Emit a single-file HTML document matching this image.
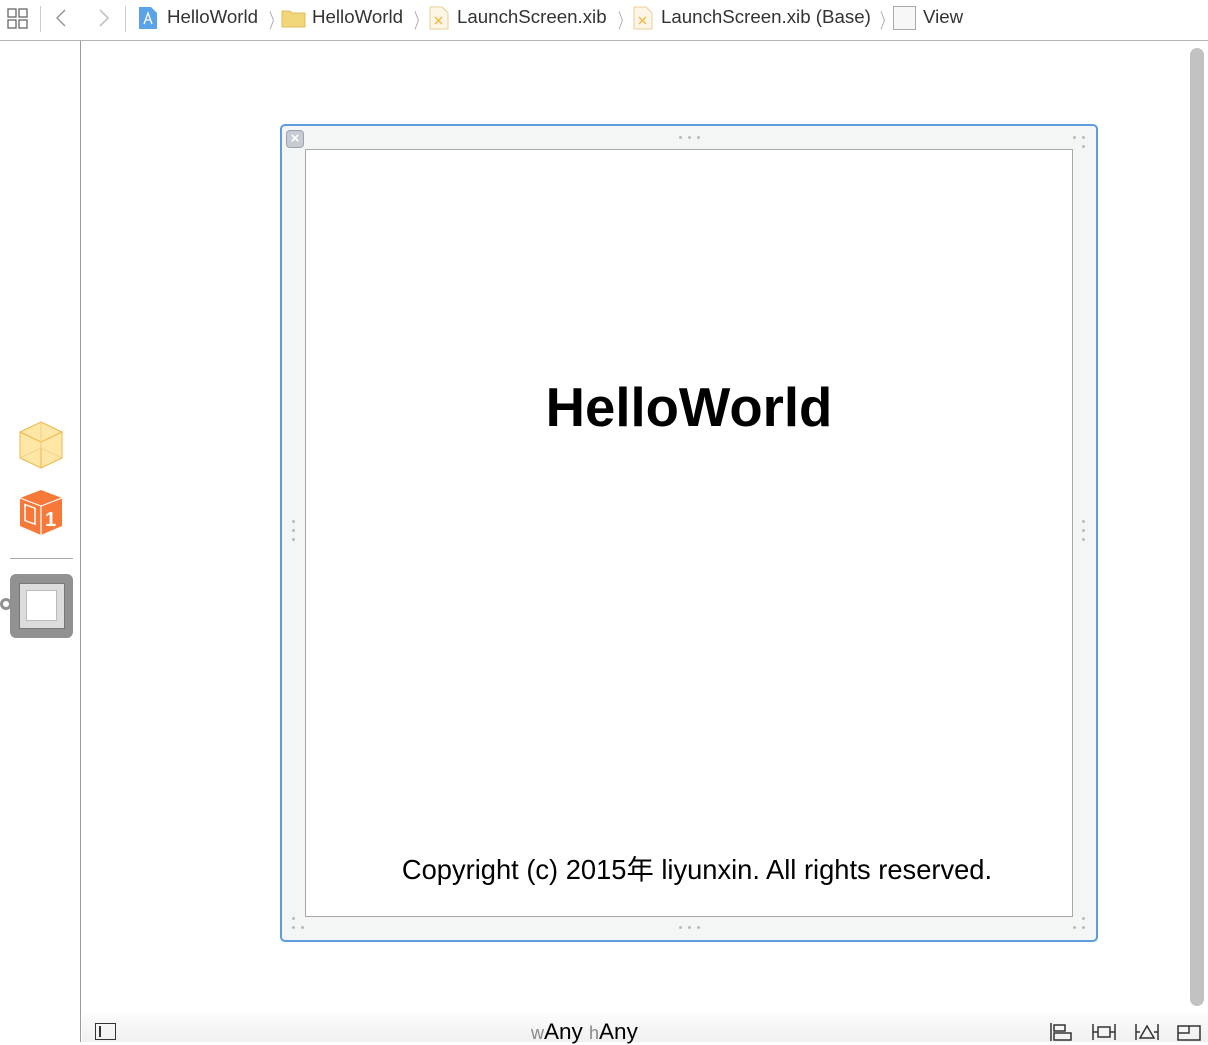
<!DOCTYPE html>
<html><head><meta charset="utf-8"><style>
*{margin:0;padding:0;box-sizing:border-box}
body{width:1208px;height:1042px;overflow:hidden;background:#fff;font-family:"Liberation Sans","Noto Sans CJK SC",sans-serif;position:relative}
.top{position:absolute;left:0;top:0;width:1208px;height:41px;background:#fff;border-bottom:1px solid #b5b5b5}
.t{position:absolute;top:6px;font-size:18.7px;color:#333;white-space:nowrap}
.sep{position:absolute;top:5px;font-size:20px;color:#aaa;transform:scaleX(.6)}
.left{position:absolute;left:0;top:41px;width:81px;height:1001px;border-right:1px solid #9a9a9a;background:#fff}
.frame{position:absolute;left:280px;top:124px;width:818px;height:818px;border:2px solid #5e9be0;border-radius:5px;background:#f4f5f5}
.view{position:absolute;left:305px;top:149px;width:768px;height:768px;border:1px solid #a8a8a8;background:#fff}
.dot{position:absolute;width:3px;height:3px;border-radius:50%;background:#bbb}
.bottom{position:absolute;left:82px;top:1012px;width:1126px;height:30px;background:linear-gradient(#fdfdfd,#f0f0f0)}
.sb{position:absolute;left:1190px;top:48px;width:14px;height:958px;border-radius:7px;background:#c2c2c2}
</style></head><body>
<div class="top">
<svg style="position:absolute;left:7px;top:8px" width="22" height="22" viewBox="0 0 22 22" fill="none" stroke="#666" stroke-width="1.3"><rect x="1" y="1" width="8" height="8"/><rect x="12" y="1" width="8" height="8"/><rect x="1" y="12" width="8" height="8"/><rect x="12" y="12" width="8" height="8"/></svg>
<div style="position:absolute;left:40px;top:6px;width:1px;height:26px;background:#ccc"></div>
<svg style="position:absolute;left:54px;top:8px" width="14" height="20"><path d="M11 2 L3 10 L11 18" stroke="#999" stroke-width="1.5" fill="none"/></svg>
<svg style="position:absolute;left:97px;top:8px" width="14" height="20"><path d="M3 2 L11 10 L3 18" stroke="#bbb" stroke-width="1.5" fill="none"/></svg>
<div style="position:absolute;left:125px;top:6px;width:1px;height:26px;background:#ccc"></div>
<svg style="position:absolute;left:138px;top:6px" width="20" height="24"><path d="M1 1 H13 L19 7 V23 H1Z" fill="#5aa3ea"/><path d="M6 18 L10 7 L14 18 M7 14 H13" stroke="#fff" stroke-width="1.3" fill="none"/></svg>
<div class="t" style="left:167px">HelloWorld</div><div class="sep" style="left:265px">〉</div>
<svg style="position:absolute;left:281px;top:8px" width="25" height="20"><path d="M1 3 H9 L11 5 H24 V19 H1Z" fill="#f2d77a" stroke="#dcbe5c"/></svg>
<div class="t" style="left:312px">HelloWorld</div><div class="sep" style="left:410px">〉</div>
<svg style="position:absolute;left:429px;top:6px" width="20" height="24"><path d="M1 1 H13 L19 7 V23 H1Z" fill="#fdf6e6" stroke="#e8cf9a"/><path d="M6 11 L13 18 M13 11 L6 18" stroke="#f0b440" stroke-width="1.3"/></svg>
<div class="t" style="left:457px">LaunchScreen.xib</div><div class="sep" style="left:614px">〉</div>
<svg style="position:absolute;left:633px;top:6px" width="20" height="24"><path d="M1 1 H13 L19 7 V23 H1Z" fill="#fdf6e6" stroke="#e8cf9a"/><path d="M6 11 L13 18 M13 11 L6 18" stroke="#f0b440" stroke-width="1.3"/></svg>
<div class="t" style="left:661px">LaunchScreen.xib (Base)</div><div class="sep" style="left:876px">〉</div>
<div style="position:absolute;left:893px;top:6px;width:23px;height:24px;border:1px solid #aaa;background:#f7f7f7"></div>
<div class="t" style="left:923px">View</div>
</div>
<div class="left">
<svg style="position:absolute;left:18px;top:379px" width="46" height="50" viewBox="0 0 46 50"><path d="M23 2 L44 12 V38 L23 48 L2 38 V12Z" fill="#fde6a6" stroke="#eab84a"/><path d="M2 12 L23 22 L44 12 M23 22 V48" stroke="#eab84a" fill="none"/><path d="M23 2 V28 M2 38 L23 28 L44 38" stroke="#f0cf85" fill="none" stroke-width=".8"/></svg>
<svg style="position:absolute;left:18px;top:447px" width="46" height="50" viewBox="0 0 46 50"><path d="M23 2 L44 10 V38 L23 47 L2 38 V10Z" fill="#f6793a"/><path d="M2 10 L23 18 L44 10 M23 18 V47" stroke="#fff" fill="none" stroke-width="1.2"/><rect x="7" y="20" width="10" height="16" fill="none" stroke="#fff" stroke-width="1.5" transform="skewY(20) translate(0,-6)"/><text x="27" y="38" font-family="Liberation Sans" font-weight="bold" font-size="20" fill="#fff">1</text></svg>
<div style="position:absolute;left:10px;top:517px;width:63px;height:1px;background:#aaa"></div>
<div style="position:absolute;left:10px;top:533px;width:63px;height:64px;border-radius:6px;background:#919191"></div>
<div style="position:absolute;left:0px;top:557px;width:12px;height:12px;border-radius:50%;background:#919191"></div>
<div style="position:absolute;left:3px;top:560px;width:6px;height:6px;border-radius:50%;background:#fff"></div>
<div style="position:absolute;left:19px;top:542px;width:46px;height:46px;background:#dcdcdc;border:1px solid #777"></div>
<div style="position:absolute;left:26px;top:549px;width:31px;height:31px;background:#fff;border:1px solid #bbb"></div>
</div>
<div class="frame"></div>
<div style="position:absolute;left:286px;top:130px;width:18px;height:18px;border-radius:4px;background:#c8ccd2;border:1px solid #9aa2ad;color:#fff;font-size:15px;line-height:15px;text-align:center;font-weight:bold">×</div>
<div class="view"></div>
<div class="dot" style="left:679px;top:136px"></div><div class="dot" style="left:688px;top:136px"></div><div class="dot" style="left:697px;top:136px"></div>
<div class="dot" style="left:679px;top:926px"></div><div class="dot" style="left:688px;top:926px"></div><div class="dot" style="left:697px;top:926px"></div>
<div class="dot" style="left:292px;top:520px"></div><div class="dot" style="left:292px;top:529px"></div><div class="dot" style="left:292px;top:538px"></div>
<div class="dot" style="left:1082px;top:520px"></div><div class="dot" style="left:1082px;top:529px"></div><div class="dot" style="left:1082px;top:538px"></div>
<div class="dot" style="left:1073px;top:136px"></div><div class="dot" style="left:1082px;top:136px"></div><div class="dot" style="left:1082px;top:145px"></div>
<div class="dot" style="left:292px;top:917px"></div><div class="dot" style="left:292px;top:926px"></div><div class="dot" style="left:301px;top:926px"></div>
<div class="dot" style="left:1082px;top:917px"></div><div class="dot" style="left:1082px;top:926px"></div><div class="dot" style="left:1073px;top:926px"></div>
<div style="position:absolute;left:305px;top:376px;width:768px;text-align:center;font-size:54.5px;font-weight:bold;color:#000">HelloWorld</div>
<div style="position:absolute;left:305px;top:847px;width:784px;text-align:center;font-size:27.3px;color:#000;white-space:nowrap">Copyright (c) 2015年 liyunxin. All rights reserved.</div>
<div class="sb"></div>
<div class="bottom">
<div style="position:absolute;left:13px;top:11px;width:21px;height:17px;border:1.5px solid #333"></div>
<div style="position:absolute;left:17px;top:14px;width:2px;height:11px;background:#333"></div>
<div style="position:absolute;left:449px;top:7px;font-size:22.5px;color:#000;white-space:nowrap"><span style="color:#888;font-size:18px">w</span>Any <span style="color:#888;font-size:18px">h</span>Any</div>
<svg style="position:absolute;left:966px;top:10px" width="160" height="20" fill="none" stroke="#333" stroke-width="1.5"><path d="M3 1 V19 M6 3 H17 V9 H6Z M6 11 H23 V18 H6Z"/><path d="M45 2 V18 M67 2 V18 M45 10 H50 M62 10 H67 M50 5 H62 V15 H50Z"/><path d="M88 2 V18 M110 2 V18 M88 10 H92 M106 10 H110 M99 4 L106 16 H92Z"/><path d="M130 4 H152 V18 H130Z M130 11 H141 V4"/></svg>
</div>
</body></html>
